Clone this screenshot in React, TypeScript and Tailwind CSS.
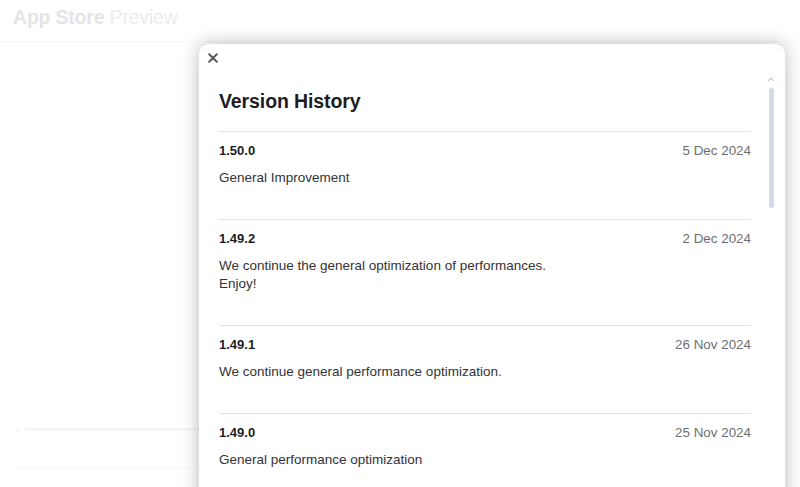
import React from "react";

const entries = [
  { v: "1.50.0", d: "5 Dec 2024", notes: ["General Improvement"] },
  { v: "1.49.2", d: "2 Dec 2024", notes: ["We continue the general optimization of performances.", "Enjoy!"] },
  { v: "1.49.1", d: "26 Nov 2024", notes: ["We continue general performance optimization."] },
  { v: "1.49.0", d: "25 Nov 2024", notes: ["General performance optimization"] },
];

export default function App() {
  return (
    <div
      className="relative w-[800px] h-[487px] overflow-hidden bg-white"
      style={{ fontFamily: '"Liberation Sans", Arial, sans-serif' }}
    >
      {/* faded background page */}
      <div className="flex flex-col h-full">
        <header className="h-[42px] border-b border-[#f6f6f6] flex items-start pt-[5px] pl-[13px]">
          <span className="text-[19.5px] leading-[24px] tracking-[-0.2px]">
            <span className="font-bold text-[#e4e4e4]">App Store</span>{" "}
            <span className="text-[#ececec]">Preview</span>
          </span>
        </header>
        <div className="flex-1 flex flex-col justify-end pb-[18px] w-[200px]">
          <div className="flex items-center gap-[5px] pl-[16px]">
            <span className="text-[11px] leading-none text-[#ededed]">‹</span>
            <div className="h-[3px] flex-1 bg-[#f4f6f8] rounded-full" />
          </div>
          <div className="mt-[33px] ml-[13px] h-px bg-[#f7f7f7]" />
        </div>
      </div>

      {/* modal */}
      <div className="absolute left-[199px] top-[44px] w-[586px] h-[470px] bg-white rounded-[10px] shadow-[0_0_18px_rgba(0,0,0,0.28)] overflow-hidden">
        <button className="absolute left-[4px] top-[4px] w-[20px] h-[20px] flex items-center justify-center">
          <svg width="10" height="10" viewBox="0 0 10 10">
            <path d="M1.2 1.2L8.8 8.8M8.8 1.2L1.2 8.8" stroke="#5b5b60" strokeWidth="2" strokeLinecap="round" />
          </svg>
        </button>

        {/* fake scrollbar */}
        <div className="absolute left-[568px] top-[33px] flex flex-col items-center">
          <svg width="8" height="5" viewBox="0 0 8 5">
            <path d="M1 4L4 1L7 4" stroke="#b8b8bd" strokeWidth="1" fill="none" />
          </svg>
          <div className="mt-[6px] w-[5px] h-[120px] rounded-full bg-[#d3dce6]" />
        </div>

        <div className="pl-[20px] pr-[34px] pt-[45px]">
          <h2 className="text-[19.5px] leading-[24px] font-bold text-[#1d1d1f] tracking-[-0.1px] mb-[18px]">
            Version History
          </h2>
          {entries.map((e) => (
            <div key={e.v} className="border-t border-[#e2e2e4] pt-[10px] pb-[32px]">
              <div className="flex justify-between items-center h-[18px] leading-[18px]">
                <span className="text-[13px] font-bold text-[#1d1d1f]">{e.v}</span>
                <span className="text-[13.4px] text-[#6e6e73]">{e.d}</span>
              </div>
              <div className="mt-[9px] text-[13.5px] leading-[18px] text-[#333336]">
                {e.notes.map((n) => (
                  <div key={n}>{n}</div>
                ))}
              </div>
            </div>
          ))}
        </div>
      </div>
    </div>
  );
}
